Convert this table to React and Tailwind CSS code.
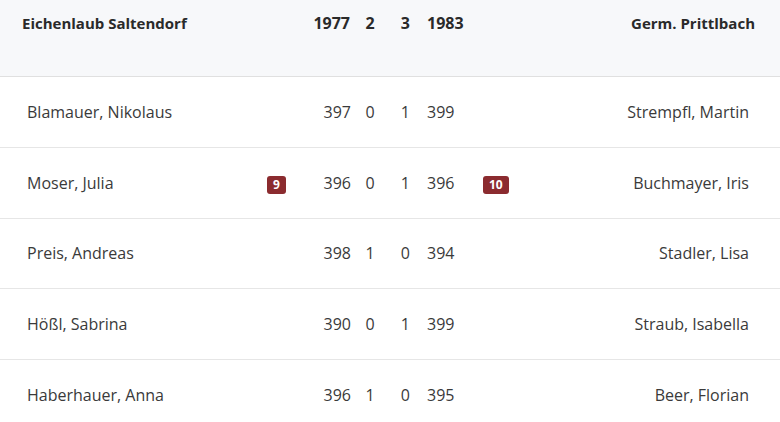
import React from "react";

const rows = [
  { l: "Blamauer, Nikolaus", a: "397", b: "0", c: "1", d: "399", r: "Strempfl, Martin" },
  { l: "Moser, Julia", lb: "9", a: "396", b: "0", c: "1", d: "396", rb: "10", r: "Buchmayer, Iris" },
  { l: "Preis, Andreas", a: "398", b: "1", c: "0", d: "394", r: "Stadler, Lisa" },
  { l: "Hößl, Sabrina", a: "390", b: "0", c: "1", d: "399", r: "Straub, Isabella" },
  { l: "Haberhauer, Anna", a: "396", b: "1", c: "0", d: "395", r: "Beer, Florian" },
];

function Badge({ children }) {
  return (
    <span className="inline-flex h-[18px] min-w-[18px] items-center justify-center rounded-[3px] bg-[#8b2b2f] px-[6px] text-[12px] font-bold leading-none text-white">
      {children}
    </span>
  );
}

export default function App() {
  return (
    <div className="w-[780px] bg-white text-[#3a3a3a]" style={{ fontFamily: "'Open Sans', 'Noto Sans', sans-serif" }}>
      <div className="flex h-[77px] items-start border-b border-[#e0e0e0] bg-[#f7f8fa] pt-[12px] text-[15px] font-bold text-[#2a2a2a]">
        <div className="w-[262px] pl-[22px]">Eichenlaub Saltendorf</div>
        <div className="w-[30px]"></div>
        <div className="w-[60px] pr-[2px] text-right text-[16px] leading-[22px]">1977</div>
        <div className="w-[36px] text-center text-[16px] leading-[22px]">2</div>
        <div className="w-[24px] pr-[2px] text-right text-[16px] leading-[22px]">3</div>
        <div className="w-[66px] pl-[15px] text-[16px] leading-[22px]">1983</div>
        <div className="w-[37px]"></div>
        <div className="flex-1 pr-[25px] text-right">Germ. Prittlbach</div>
      </div>
      {rows.map((r, i) => (
        <div key={i} className="flex h-[70.75px] items-center border-b border-[#e6e6e6] text-[16px]">
          <div className="w-[262px] pl-[27px]">{r.l}</div>
          <div className="w-[30px] pl-[5px]">{r.lb && <Badge>{r.lb}</Badge>}</div>
          <div className="w-[60px] pr-[1px] text-right">{r.a}</div>
          <div className="w-[36px] text-center">{r.b}</div>
          <div className="w-[24px] pr-[2px] text-right">{r.c}</div>
          <div className="w-[66px] pl-[15px]">{r.d}</div>
          <div className="w-[37px] pl-[5px]">{r.rb && <Badge>{r.rb}</Badge>}</div>
          <div className="flex-1 pr-[31px] text-right">{r.r}</div>
        </div>
      ))}
    </div>
  );
}
